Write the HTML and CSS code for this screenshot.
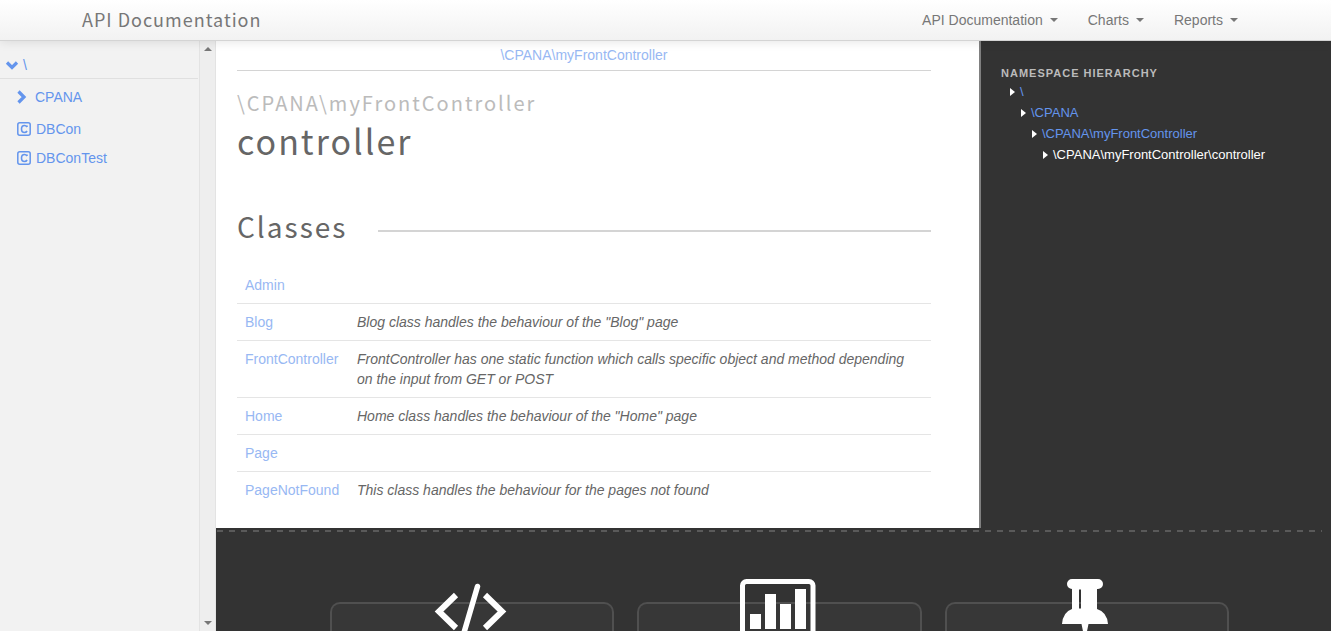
FILE: index.html
```html
<!DOCTYPE html>
<html lang="en">
<head>
<meta charset="utf-8">
<title>API Documentation</title>
<link rel="stylesheet" href="styles.css">
</head>
<body>
<header class="navbar">
  <a class="brand" href="#">API Documentation</a>
  <nav class="nav">
    <a href="#">API Documentation<span class="caret"></span></a>
    <a href="#">Charts<span class="caret"></span></a>
    <a href="#">Reports<span class="caret"></span></a>
  </nav>
</header>
<div class="shell">
  <aside class="sidebar">
    <div class="tree">
      <a class="tree-root" href="#"><svg width="14" height="14" viewBox="0 0 14 14"><path d="M2 4.500 7 9.500 12 4.500" fill="none" stroke="currentColor" stroke-width="3.200"/></svg>\</a>
      <ul class="tree-list">
        <li><a class="tree-package" href="#"><svg width="10" height="14" viewBox="0 0 10 14"><path d="M1.500 1.500 7 7 1.500 12.500" fill="none" stroke="currentColor" stroke-width="3.200"/></svg>CPANA</a></li>
        <li><a class="tree-class" href="#"><svg width="14" height="14" viewBox="0 0 14 14"><rect x=".8" y=".8" width="12.400" height="12.400" rx="2" fill="none" stroke="currentColor" stroke-width="1.500"/><path d="M10 5V3.500M10 5C9.300 3.700 8.400 3.500 7.500 3.500 5.500 3.500 4.500 5 4.500 7s1 3.500 3 3.500c1.200 0 2-.5 2.600-1.500" fill="none" stroke="currentColor" stroke-width="1.600"/></svg>DBCon</a></li>
        <li><a class="tree-class" href="#"><svg width="14" height="14" viewBox="0 0 14 14"><rect x=".8" y=".8" width="12.400" height="12.400" rx="2" fill="none" stroke="currentColor" stroke-width="1.500"/><path d="M10 5V3.500M10 5C9.300 3.700 8.400 3.500 7.500 3.500 5.500 3.500 4.500 5 4.500 7s1 3.500 3 3.500c1.200 0 2-.5 2.600-1.500" fill="none" stroke="currentColor" stroke-width="1.600"/></svg>DBConTest</a></li>
      </ul>
    </div>
    <div class="scrollbar">
      <svg width="8" height="4" viewBox="0 0 8 4"><path d="M0 4 4 0 8 4z" fill="#777"/></svg>
      <svg width="8" height="4" viewBox="0 0 8 4"><path d="M0 0 4 4 8 0z" fill="#777"/></svg>
    </div>
  </aside>
  <div class="page">
    <div class="columns">
      <main class="content">
        <div class="breadcrumb"><a href="#">\CPANA\myFrontController</a></div>
        <h1><small>\CPANA\myFrontController</small>controller</h1>
        <h2>Classes</h2>
        <table class="classes">
          <tr><td><a href="#">Admin</a></td><td></td></tr>
          <tr><td><a href="#">Blog</a></td><td><em>Blog class handles the behaviour of the "Blog" page</em></td></tr>
          <tr><td><a href="#">FrontController</a></td><td><em>FrontController has one static function which calls specific object and method depending on the input from GET or POST</em></td></tr>
          <tr><td><a href="#">Home</a></td><td><em>Home class handles the behaviour of the "Home" page</em></td></tr>
          <tr><td><a href="#">Page</a></td><td></td></tr>
          <tr><td><a href="#">PageNotFound</a></td><td><em>This class handles the behaviour for the pages not found</em></td></tr>
        </table>
      </main>
      <aside class="hierarchy">
        <h3>Namespace Hierarchy</h3>
        <ul>
          <li><a href="#">\</a>
            <ul>
              <li><a href="#">\CPANA</a>
                <ul>
                  <li><a href="#">\CPANA\myFrontController</a>
                    <ul>
                      <li><a class="current" href="#">\CPANA\myFrontController\controller</a></li>
                    </ul>
                  </li>
                </ul>
              </li>
            </ul>
          </li>
        </ul>
      </aside>
    </div>
    <footer class="footer">
      <section class="card">
        <svg class="card-icon" width="76" height="54" viewBox="2 0 76 54"><path d="M24 16 7 32.500 24 49M53 16 70 32.500 53 49" fill="none" stroke="#fff" stroke-width="6"/><path d="M45.500 7.500 31 57" stroke="#fff" stroke-width="5.500" stroke-linecap="round"/></svg>
      </section>
      <section class="card">
        <svg class="card-icon" width="76" height="54" viewBox="1 0 76 54" overflow="visible"><rect x="2.500" y="2.500" width="70.500" height="55" rx="4" fill="none" stroke="#fff" stroke-width="5"/><path d="M10 35h11v15h-11zM25 15h11v35h-11zM40 25h11v25h-11zM55 10h11v40h-11z" fill="#fff"/></svg>
      </section>
      <section class="card">
        <svg class="card-icon" width="76" height="54" viewBox="0 0 76 54"><path fill="#fff" fill-rule="evenodd" d="M23 0H49a5 5 0 0 1 0 10H48V30Q58 33 59 45H39.500L36 62 32.500 45H13Q14 33 23 30V10a5 5 0 0 1 0-10zM30 10.500V29.500H32V10.500z"/></svg>
      </section>
    </footer>
  </div>
</div>
</body>
</html>
```
FILE: styles.css
```css
* {
  box-sizing: border-box;
}

body {
  margin: 0;
  height: 100vh;
  display: flex;
  flex-direction: column;
  overflow: hidden;
  background: #fff;
  color: #666;
  font: 14px/20px "Liberation Sans", Arial, sans-serif;
}

a {
  color: #6495ed;
  text-decoration: none;
}

ul {
  margin: 0;
  padding: 0;
  list-style: none;
}

.navbar {
  position: relative;
  z-index: 1;
  flex: none;
  display: flex;
  justify-content: space-between;
  align-items: center;
  height: 41px;
  padding: 0 93px 0 82px;
  border-bottom: 1px solid #d4d4d4;
  background: linear-gradient(#fff, #f2f2f2);
  box-shadow: 0 1px 10px rgba(0, 0, 0, 0.1);
}

.brand,
h1,
h2 {
  font-family: "Noto Sans CJK SC", sans-serif;
  font-weight: 400;
}

.brand {
  padding-bottom: 2px;
  color: #777;
  font-size: 18px;
  letter-spacing: 1px;
}

.nav {
  display: flex;
  gap: 30px;
}

.nav a {
  display: flex;
  align-items: center;
  gap: 7px;
  color: #777;
}

.caret {
  border: 4px solid transparent;
  border-top-color: #777;
  border-bottom: 0;
}

.shell {
  flex: 1;
  min-height: 0;
  display: flex;
}

.sidebar {
  flex: none;
  display: flex;
  width: 216px;
  background: #f2f2f2;
}

.tree {
  flex: 1;
  padding-top: 14px;
}

.tree a {
  display: flex;
  align-items: center;
}

.tree .tree-root {
  gap: 4px;
  padding: 0 5px 3px;
  margin-right: 1px;
  border-bottom: 1px solid #e0e0e0;
}

.tree-list {
  padding: 8px 0 0 17px;
}

.tree .tree-package {
  gap: 8px;
  padding-bottom: 12px;
}

.tree .tree-class {
  gap: 5px;
  padding-bottom: 9px;
}

.scrollbar {
  display: flex;
  flex-direction: column;
  justify-content: space-between;
  align-items: center;
  width: 17px;
  padding: 6px 0;
  border: solid #e3e3e3;
  border-width: 0 1px;
  background: #eee;
}

.page {
  flex: 1;
  min-width: 0;
  display: flex;
  flex-direction: column;
  background: #333;
}

.columns {
  flex: none;
  display: grid;
  grid-template-columns: 763fr 352fr;
}

.content {
  padding: 4px 48px 20px 21px;
  background: #fff;
}

.content a {
  color: #98b8f3;
}

.breadcrumb {
  padding-bottom: 5px;
  border-bottom: 1px solid #d4d4d4;
  text-align: center;
}

h1 {
  margin: 13px 0 0;
  font-size: 34px;
  line-height: 38px;
  letter-spacing: 2px;
}

h1 small {
  display: block;
  color: #bbb;
  font-size: 20px;
}

h2 {
  display: flex;
  align-items: center;
  gap: 31px;
  margin: 46px 0 21px;
  font-size: 28px;
  line-height: 40px;
  letter-spacing: 2px;
}

h2::after {
  content: "";
  flex: 1;
  height: 2px;
  margin-top: 10px;
  background: #d4d4d4;
}

.classes {
  width: 100%;
  border-collapse: collapse;
}

.classes td {
  padding: 8px;
  vertical-align: top;
}

.classes td:first-child {
  min-width: 112px;
}

.classes td:last-child {
  width: 100%;
}

.classes tr + tr td {
  border-top: 1px solid #e5e5e5;
}

.hierarchy {
  padding: 25px 20px;
  border-left: 2px solid #808080;
  font-size: 13px;
  line-height: 21px;
}

.hierarchy h3 {
  margin: 0;
  color: #bbb;
  font-size: 11px;
  line-height: 15px;
  letter-spacing: 1px;
  text-transform: uppercase;
}

.hierarchy > ul {
  padding-left: 9px;
}

.hierarchy ul ul {
  padding-left: 11px;
}

.hierarchy li > a::before {
  content: "";
  display: inline-block;
  margin-right: 5px;
  border: 4px solid transparent;
  border-left: 5px solid #fff;
  border-right: 0;
}

.hierarchy .current {
  color: #fff;
}

.footer {
  flex: 1;
  min-height: 0;
  display: grid;
  grid-template-columns: repeat(3, 1fr);
  gap: 23px;
  margin: 2px 9px 0 1px;
  padding: 72px 93px 0 113px;
  background: repeating-linear-gradient(90deg, #5a5a5a 0 6px, transparent 6px 12px) 0 0 / 100% 2px no-repeat;
}

.card {
  border: 2px solid #505050;
  border-bottom: 0;
  border-radius: 10px 10px 0 0;
  background: #373737;
  text-align: center;
}

.card-icon {
  display: block;
  margin: -25px auto 0;
}
```
